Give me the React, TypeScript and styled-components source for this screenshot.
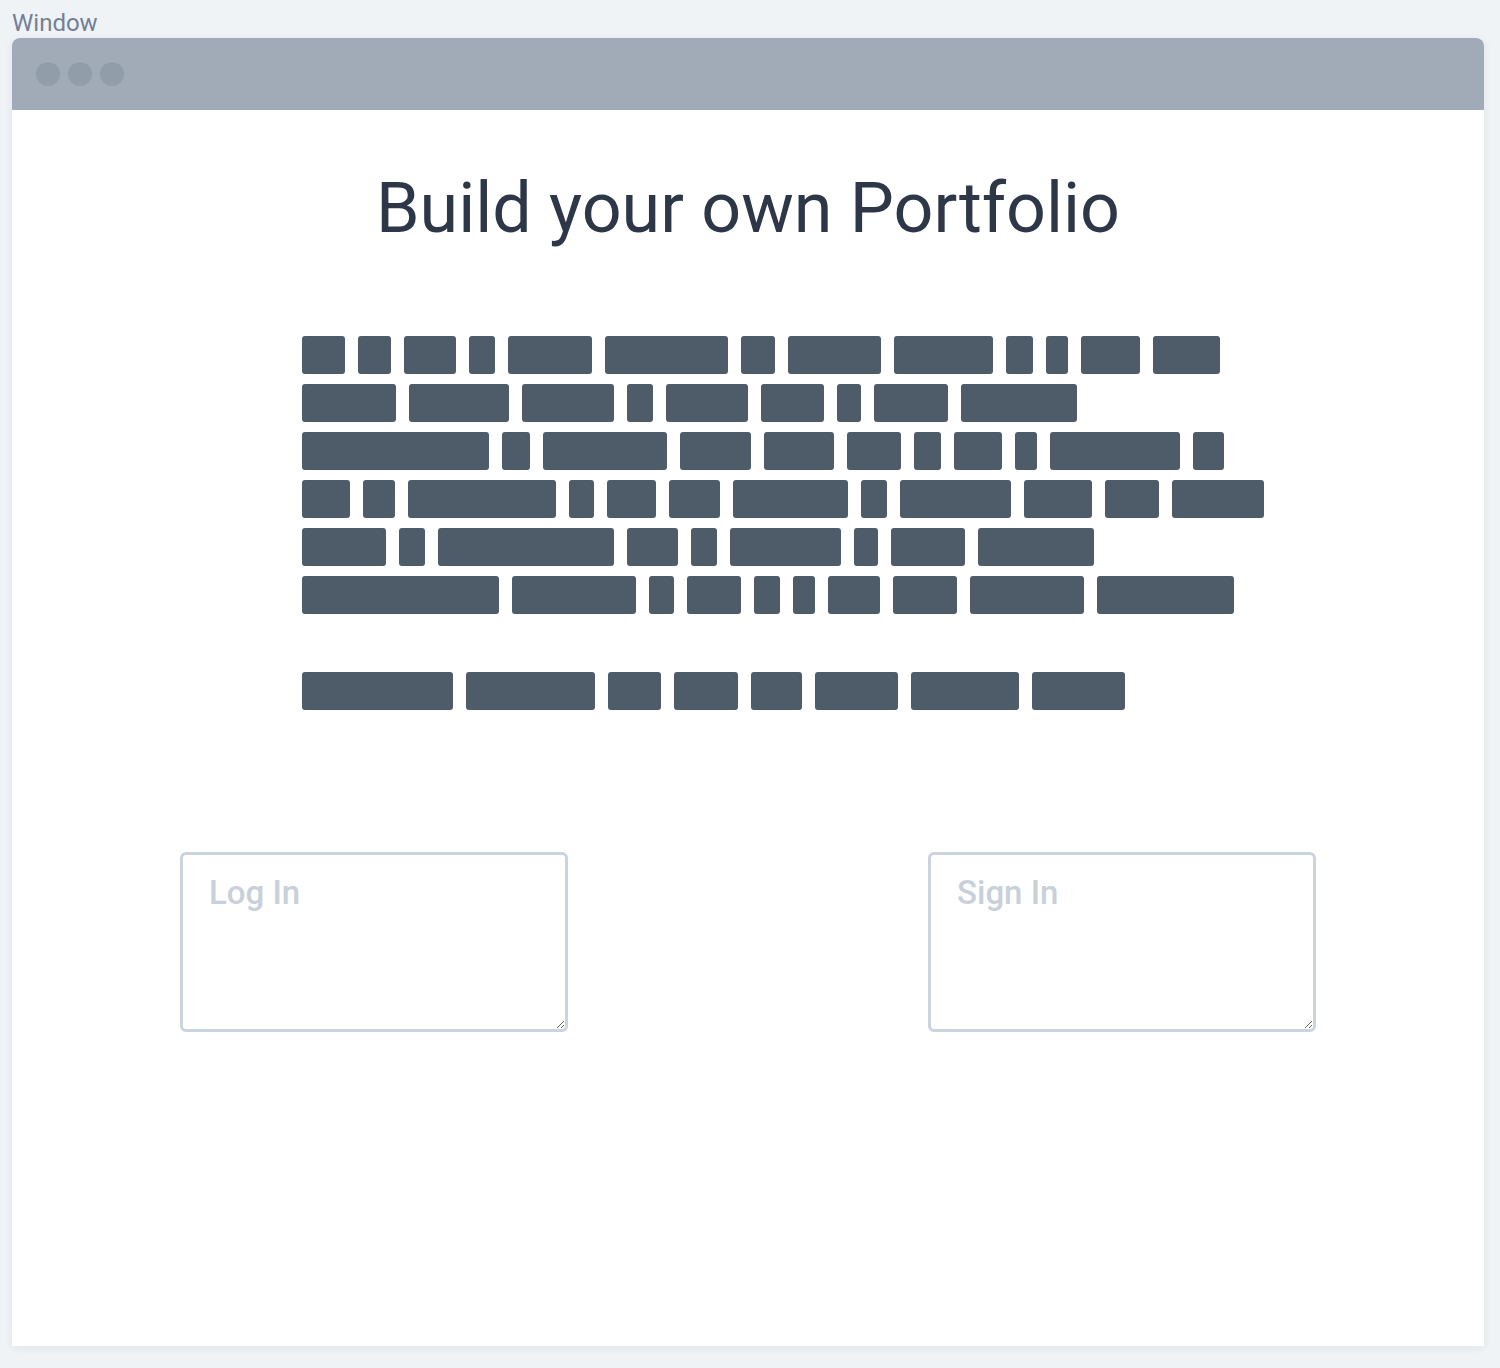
import styled, { createGlobalStyle } from "styled-components";

const GlobalStyle = createGlobalStyle`
  html, body {
    margin: 0;
    padding: 0;
    background: #eff3f6;
  }
  body {
    font-family: "Roboto", "Open Sans", sans-serif;
  }
`;

// word widths for each line of the redacted copy
const paragraphs: number[][][] = [
  [
    [43, 33, 52, 26, 84, 123, 34, 93, 99, 27, 22, 59, 67],
    [94, 100, 92, 26, 82, 63, 24, 74, 116],
    [187, 28, 124, 71, 70, 54, 27, 48, 22, 130, 31],
    [48, 32, 148, 25, 49, 51, 115, 26, 111, 68, 54, 92],
    [84, 26, 176, 51, 26, 111, 24, 74, 116],
    [197, 124, 25, 54, 26, 22, 52, 64, 114, 137],
  ],
  [[151, 129, 53, 64, 51, 83, 108, 93]],
];

function App() {
  return (
    <>
      <GlobalStyle />
      <Page>
        <WindowLabel>Window</WindowLabel>
        <WindowFrame>
          <TitleBar>
            <Dot />
            <Dot />
            <Dot />
          </TitleBar>
          <Content>
            <Title>Build your own Portfolio</Title>
            <Copy>
              {paragraphs.map((lines, p) => (
                <Paragraph key={p}>
                  {lines.map((words, l) => (
                    <Line key={l}>
                      {words.map((w, i) => (
                        <Word key={i} style={{ width: w }} />
                      ))}
                    </Line>
                  ))}
                </Paragraph>
              ))}
            </Copy>
            <Forms>
              <Field placeholder="Log In" />
              <Field placeholder="Sign In" />
            </Forms>
          </Content>
        </WindowFrame>
      </Page>
    </>
  );
}

const Page = styled.div`
  padding: 0 16px 22px 12px;
  display: flex;
  flex-direction: column;
`;

const WindowLabel = styled.div`
  height: 38px;
  line-height: 46px;
  font-size: 24px;
  color: #718096;
`;

const WindowFrame = styled.div`
  height: 1308px;
  display: flex;
  flex-direction: column;
  background: #ffffff;
  border-radius: 8px 8px 0 0;
  box-shadow: 0 2px 8px rgba(45, 55, 72, 0.08);
`;

const TitleBar = styled.div`
  height: 72px;
  flex-shrink: 0;
  display: flex;
  align-items: center;
  gap: 8px;
  padding-left: 24px;
  background: #a0abb7;
  border-radius: 8px 8px 0 0;
`;

const Dot = styled.span`
  width: 24px;
  height: 24px;
  border-radius: 50%;
  background: #929daa;
`;

const Content = styled.div`
  display: flex;
  flex-direction: column;
  align-items: center;
`;

const Title = styled.h1`
  margin: 56px 0 0;
  font-size: 70px;
  font-weight: 400;
  line-height: 84px;
  color: #2d3748;
`;

const Copy = styled.div`
  align-self: flex-start;
  margin: 86px 0 0 290px;
  display: flex;
  flex-direction: column;
  gap: 58px;
`;

const Paragraph = styled.div`
  display: flex;
  flex-direction: column;
  gap: 10px;
`;

const Line = styled.div`
  display: flex;
  gap: 13px;
`;

const Word = styled.span`
  height: 38px;
  border-radius: 3px;
  background: #4e5b69;
`;

const Forms = styled.div`
  align-self: stretch;
  margin-top: 142px;
  padding: 0 168px;
  display: flex;
  justify-content: space-between;
`;

const Field = styled.textarea`
  box-sizing: border-box;
  width: 388px;
  height: 180px;
  padding: 18px 26px;
  border: 3px solid #cbd3dc;
  border-radius: 6px;
  background: #ffffff;
  font-family: "Roboto", "Open Sans", sans-serif;
  font-size: 33px;
  font-weight: 500;
  color: #2d3748;
  outline: none;

  &::placeholder {
    color: #c8d0d9;
  }
`;

export default App;
